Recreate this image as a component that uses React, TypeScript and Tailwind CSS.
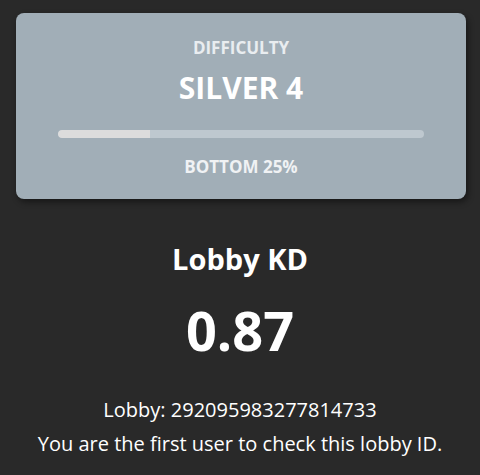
export default function App() {
  const percent = 25;
  return (
    <div className="min-h-[475px] bg-[#292929] pt-[13px] pb-4 font-['Open_Sans',sans-serif] text-white">
      <div className="ml-[16px] flex w-[450px] flex-col items-center rounded-lg bg-[#a1aeb7] pt-[23px] pb-[20px] shadow-[2px_3px_6px_rgba(0,0,0,0.45)]">
        <p className="text-[17px] leading-[24px] font-bold text-[#e9edf0]">DIFFICULTY</p>
        <p className="mt-[10px] text-[30px] leading-[36px] font-bold text-white">SILVER 4</p>
        <div className="mt-[24px] h-[8px] w-[366px] overflow-hidden rounded-full bg-[#bec8cf]">
          <div className="h-full rounded-l-full bg-[#dcdcdc]" style={{ width: `${percent}%` }} />
        </div>
        <p className="mt-[17px] text-[17px] leading-[24px] font-bold text-[#f0f2f4]">BOTTOM 25%</p>
      </div>
      <div className="flex flex-col items-center">
        <h2 className="mt-[42px] text-[29px] leading-[36px] font-bold">Lobby KD</h2>
        <p className="mt-[21px] text-[54px] leading-[64px] font-bold">0.87</p>
        <p className="mt-[31px] text-[20px] leading-[34px]">Lobby: 292095983277814733</p>
        <p className="text-[20px] leading-[34px]">You are the first user to check this lobby ID.</p>
      </div>
    </div>
  );
}
